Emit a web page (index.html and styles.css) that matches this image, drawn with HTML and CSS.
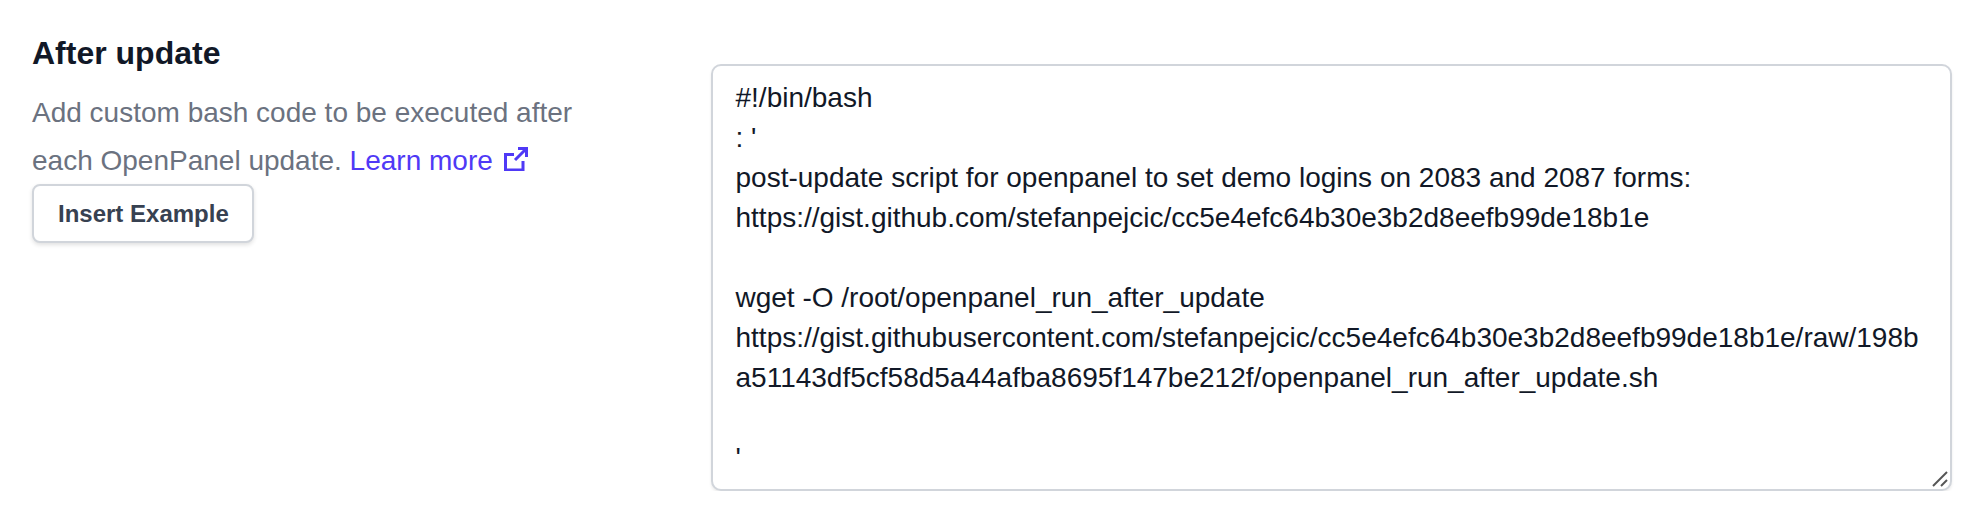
FILE: index.html
```html
<!DOCTYPE html>
<html lang="en">
<head>
    <meta charset="UTF-8">
    <title>After update</title>
    <link rel="stylesheet" href="styles.css">
</head>
<body>
    <div class="section">
        <div class="intro">
            <h2>After update</h2>
            <p>Add custom bash code to be executed after each OpenPanel update. <a href="#">Learn more <svg class="ext-icon" viewBox="0 0 24 24" fill="none" stroke="currentColor" stroke-width="3"><path d="M14 1.5h8.5V10"/><path d="M22 2 11 13"/><path d="M19 14v9H1.5V7.5H10"/></svg></a></p>
            <button>Insert Example</button>
        </div>
        <div class="editor">
            <textarea spellcheck="false">#!/bin/bash
: '
post-update script for openpanel to set demo logins on 2083 and 2087 forms:
https://gist.github.com/stefanpejcic/cc5e4efc64b30e3b2d8eefb99de18b1e

wget -O /root/openpanel_run_after_update
https://gist.githubusercontent.com/stefanpejcic/cc5e4efc64b30e3b2d8eefb99de18b1e/raw/198ba51143df5cf58d5a44afba8695f147be212f/openpanel_run_after_update.sh

'</textarea>
            <svg class="grip" viewBox="0 0 16 16" fill="none" stroke="#555" stroke-width="2"><path d="M1 15 15 1"/><path d="M9 15 15 9"/></svg>
        </div>
    </div>
</body>
</html>
```

FILE: styles.css
```css
* {
    box-sizing: border-box;
}
body {
    margin: 0;
    background: #fff;
    font-family: "Liberation Sans", Arial, sans-serif;
}
.section {
    display: flex;
    padding: 32px 32px 0 32px;
}
.intro {
    width: 678.5px;
    flex-shrink: 0;
}
h2 {
    margin: 0 0 15px 0;
    color: #111827;
    font-size: 32px;
    line-height: 42px;
    font-weight: 700;
}
p {
    margin: 0 0 -1px 0;
    width: 560px;
    color: #6b7280;
    font-size: 28px;
    line-height: 48px;
}
a {
    color: #4f39f6;
    text-decoration: none;
}
.ext-icon {
    width: 24px;
    height: 24px;
    vertical-align: -1px;
    margin-left: 3px;
}
button {
    display: block;
    height: 59px;
    padding: 0 23px 0 24px;
    background: #fff;
    color: #374151;
    font-family: inherit;
    font-size: 24px;
    font-weight: 700;
    border: 2px solid #d1d5db;
    border-radius: 8px;
    box-shadow: 0 2px 4px rgba(0, 0, 0, 0.12);
}
.editor {
    flex: 1;
    padding-top: 32px;
    position: relative;
}
textarea {
    display: block;
    width: 100%;
    height: 427px;
    padding: 12px 21px 12px 23px;
    color: #111827;
    font-family: inherit;
    font-size: 28px;
    line-height: 40px;
    border: 2px solid #d1d5db;
    border-radius: 10px;
    box-shadow: 0 2px 3px rgba(0, 0, 0, 0.08);
    outline: none;
    resize: none;
    overflow: hidden;
}
.grip {
    position: absolute;
    right: 4px;
    bottom: 4px;
    width: 16px;
    height: 16px;
}
```
